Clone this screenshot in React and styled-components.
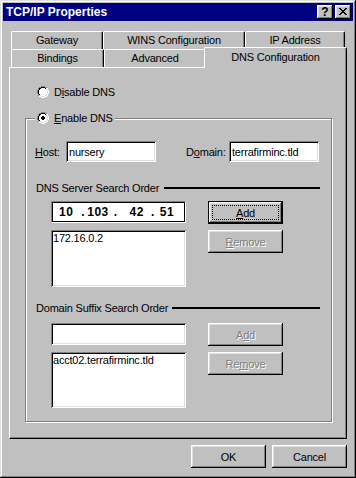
import React from "react";
import styled, { createGlobalStyle, css } from "styled-components";

const GlobalStyle = createGlobalStyle`
  html, body { margin: 0; padding: 0; background: #c0c0c0; }
  body {
    font-family: "Liberation Sans", Arial, sans-serif;
    font-size: 11px;
    letter-spacing: -0.2px;
    color: #000;
  }
  #root { width: 356px; height: 478px; }
`;

const raised = css`
  box-shadow: inset -1px -1px #000, inset 1px 1px #fff, inset -2px -2px #808080,
    inset 2px 2px #dfdfdf;
`;
const sunken = css`
  box-shadow: inset 1px 1px #808080, inset -1px -1px #fff, inset 2px 2px #000,
    inset -2px -2px #dfdfdf;
`;

const Window = styled.div`
  box-sizing: border-box;
  width: 356px;
  height: 478px;
  padding: 3px;
  background: #c0c0c0;
  box-shadow: inset -1px -1px #000, inset 1px 1px #dfdfdf, inset -2px -2px #808080,
    inset 2px 2px #fff;
  display: flex;
  flex-direction: column;
`;

const TitleBar = styled.div`
  flex: none;
  height: 18px;
  display: flex;
  align-items: center;
  background: #000080;
  color: #fff;
  padding: 0 2px 0 3px;
`;

const TitleText = styled.span`
  flex: 1;
  font-weight: bold;
  font-size: 12px;
  letter-spacing: 0;
`;

const CaptionButtons = styled.div`
  display: flex;
  gap: 2px;
`;

const CaptionButton = styled.div`
  box-sizing: border-box;
  width: 16px;
  height: 14px;
  background: #c0c0c0;
  ${raised}
  display: flex;
  align-items: center;
  justify-content: center;
  color: #000;
  font-weight: bold;
  font-size: 12px;
  letter-spacing: 0;
  line-height: 1;
  padding-bottom: 1px;
`;

const Body = styled.div`
  flex: 1;
  display: flex;
  flex-direction: column;
  padding: 10px 6px 7px 6px;
`;

const TabStrip = styled.div`
  position: relative;
  z-index: 1;
  display: flex;
  flex-direction: column;
  padding: 0 2px;
`;

const TabRow = styled.div`
  display: flex;
  align-items: flex-start;
  height: 18px;
`;

const Tab = styled.div`
  box-sizing: border-box;
  flex: none;
  width: ${(p) => p.$w}px;
  height: 18px;
  background: #c0c0c0;
  border-top: 1px solid #fff;
  border-left: 1px solid #fff;
  border-right: 1px solid #000;
  border-radius: 2px 2px 0 0;
  box-shadow: inset -1px 0 #808080;
  display: flex;
  align-items: center;
  justify-content: center;
  padding-bottom: 1px;
  white-space: nowrap;
  ${(p) =>
    p.$active &&
    css`
      width: ${p.$w + 4}px;
      height: 21px;
      margin: -2px -2px -1px -2px;
      padding-bottom: 3px;
      position: relative;
      z-index: 2;
    `}
`;

const Panel = styled.div`
  box-sizing: border-box;
  height: 372px;
  border-top: 1px solid #fff;
  border-left: 1px solid #fff;
  border-right: 1px solid #000;
  border-bottom: 1px solid #000;
  box-shadow: inset -1px -1px #808080;
  padding: 18px 0 0 15px;
  display: flex;
  flex-direction: column;
  align-items: flex-start;
`;

const RadioRow = styled.div`
  display: flex;
  align-items: center;
  height: 12px;
  gap: 5px;
  margin-left: ${(p) => p.$ml || 0}px;
  white-space: nowrap;
`;

const GroupBox = styled.div`
  position: relative;
  box-sizing: border-box;
  width: 307px;
  height: 304px;
  margin-top: 20px;
  border: 1px solid #808080;
  box-shadow: inset 1px 1px #fff, 1px 1px #fff;
  padding: 22px 11px 0 0;
  display: flex;
  flex-direction: column;
  align-items: stretch;
`;

const Legend = styled.div`
  position: absolute;
  top: -7px;
  left: 9px;
  background: #c0c0c0;
  padding: 0 2px;
`;

const FieldRow = styled.div`
  display: flex;
  align-items: center;
  height: 21px;
  margin-left: 9px;
`;

const Label = styled.span`
  flex: none;
  width: ${(p) => p.$w}px;
  margin-left: ${(p) => p.$ml || 0}px;
  white-space: nowrap;
`;

const Edit = styled.div`
  box-sizing: border-box;
  flex: none;
  width: ${(p) => p.$w || 135}px;
  height: ${(p) => p.$h || 21}px;
  background: #fff;
  ${sunken}
  padding: 0 3px;
  display: flex;
  align-items: center;
  white-space: nowrap;
`;

const SectionHeader = styled.div`
  display: flex;
  align-items: center;
  height: 13px;
  margin: ${(p) => p.$mt}px 0 0 10px;
  white-space: nowrap;
`;

const Rule = styled.div`
  flex: 1;
  height: 2px;
  background: #000;
  margin-left: ${(p) => p.$gap}px;
`;

const ControlGrid = styled.div`
  display: grid;
  grid-template-columns: 135px 75px;
  grid-template-rows: 23px ${(p) => p.$listH}px;
  column-gap: 22px;
  row-gap: 6px;
  align-items: start;
  margin: ${(p) => p.$mt}px 0 0 25px;
`;

const IpBox = styled.div`
  box-sizing: border-box;
  height: 22px;
  background: #fff;
  border: 1px solid;
  border-color: #808080 #fff #fff #808080;
  box-shadow: inset 0 0 0 1px #000;
  display: flex;
  align-items: center;
  font-weight: bold;
  font-size: 12px;
  letter-spacing: 0.5px;
  padding-left: 7px;
  white-space: pre;
`;

const Octet = styled.span`
  margin-left: ${(p) => p.$ml || 0}px;
`;

const ListBox = styled.div`
  box-sizing: border-box;
  height: 100%;
  background: #fff;
  ${sunken}
  padding: 2px 2px;
  line-height: 13px;
  white-space: nowrap;
`;

const Button = styled.div`
  position: relative;
  box-sizing: border-box;
  width: 75px;
  height: 23px;
  background: #c0c0c0;
  ${raised}
  display: flex;
  align-items: center;
  justify-content: center;
  white-space: nowrap;
  ${(p) =>
    p.$disabled &&
    css`
      color: #808080;
      text-shadow: 1px 1px #fff;
    `}
  ${(p) =>
    p.$default &&
    css`
      border: 1px solid #000;
      &::after {
        content: "";
        position: absolute;
        inset: 3px;
        border: 1px dotted #000;
      }
    `}
`;

const ButtonRow = styled.div`
  display: flex;
  justify-content: flex-end;
  gap: 6px;
  margin-top: 6px;
`;

/* ---------- pixel drawings ---------- */

const OUTER = {
  0: [4, 5, 6, 7], 1: [2, 3, 8, 9], 2: [1, 10], 3: [1, 10], 4: [0, 11], 5: [0, 11],
  6: [0, 11], 7: [0, 11], 8: [1, 10], 9: [1, 10], 10: [2, 3, 8, 9], 11: [4, 5, 6, 7],
};
const INNER = {
  1: [4, 5, 6, 7], 2: [2, 3, 8, 9], 3: [2, 9], 4: [1, 10], 5: [1, 10], 6: [1, 10],
  7: [1, 10], 8: [2, 9], 9: [2, 3, 8, 9], 10: [4, 5, 6, 7],
};
const FILL = { 2: [4, 7], 3: [3, 8], 4: [2, 9], 5: [2, 9], 6: [2, 9], 7: [2, 9], 8: [3, 8], 9: [4, 7] };
const DOT = [
  [5, 4], [6, 4], [4, 5], [5, 5], [6, 5], [7, 5], [4, 6], [5, 6], [6, 6], [7, 6], [5, 7], [6, 7],
];

function RadioIcon({ checked }) {
  const px = [];
  Object.entries(OUTER).forEach(([y, xs]) =>
    xs.forEach((x) => px.push([x, +y, x + +y <= 10 ? "#808080" : "#fff"]))
  );
  Object.entries(INNER).forEach(([y, xs]) =>
    xs.forEach((x) => px.push([x, +y, x + +y <= 10 ? "#000" : "#dfdfdf"]))
  );
  Object.entries(FILL).forEach(([y, [a, b]]) => {
    for (let x = a; x <= b; x++) px.push([x, +y, "#fff"]);
  });
  if (checked) DOT.forEach(([x, y]) => px.push([x, y, "#000"]));
  return (
    <svg width="12" height="12" viewBox="0 0 12 12" shapeRendering="crispEdges" style={{ flex: "none" }}>
      {px.map(([x, y, c], i) => (
        <rect key={i} x={x} y={y} width="1" height="1" fill={c} />
      ))}
    </svg>
  );
}

const X_PIX = ["KK....KK", ".KK..KK.", "..KKKK..", "...KK...", "..KKKK..", ".KK..KK.", "KK....KK"];

function CloseGlyph() {
  const rects = [];
  X_PIX.forEach((row, y) =>
    row.split("").forEach((ch, x) => {
      if (ch === "K") rects.push(<rect key={`${x}-${y}`} x={x} y={y} width="1" height="1" fill="#000" />);
    })
  );
  return (
    <svg width="8" height="7" viewBox="0 0 8 7" shapeRendering="crispEdges">
      {rects}
    </svg>
  );
}

export default function App() {
  return (
    <>
      <GlobalStyle />
      <Window>
        <TitleBar>
          <TitleText>TCP/IP Properties</TitleText>
          <CaptionButtons>
            <CaptionButton>?</CaptionButton>
            <CaptionButton>
              <CloseGlyph />
            </CaptionButton>
          </CaptionButtons>
        </TitleBar>

        <Body>
          <TabStrip>
            <TabRow>
              <Tab $w={92}>Gateway</Tab>
              <Tab $w={142}>WINS Configuration</Tab>
              <Tab $w={100}>IP Address</Tab>
            </TabRow>
            <TabRow>
              <Tab $w={93}>Bindings</Tab>
              <Tab $w={102}>Advanced</Tab>
              <Tab $w={139} $active>
                DNS Configuration
              </Tab>
            </TabRow>
          </TabStrip>

          <Panel>
            <RadioRow $ml={12}>
              <RadioIcon />
              <span>
                D<u>i</u>sable DNS
              </span>
            </RadioRow>

            <GroupBox>
              <Legend>
                <RadioRow>
                  <RadioIcon checked />
                  <span>
                    <u>E</u>nable DNS
                  </span>
                </RadioRow>
              </Legend>

              <FieldRow>
                <Label $w={31}>
                  <u>H</u>ost:
                </Label>
                <Edit $w={90}>nursery</Edit>
                <Label $w={43} $ml={30}>
                  D<u>o</u>main:
                </Label>
                <Edit $w={90}>terrafirminc.tld</Edit>
              </FieldRow>

              <SectionHeader $mt={19}>
                <span>DNS Server Search Order</span>
                <Rule $gap={5} />
              </SectionHeader>

              <ControlGrid $mt={7} $listH={57}>
                <IpBox>
                  <Octet>10</Octet>
                  <Octet $ml={8}>.</Octet>
                  <Octet $ml={2}>103</Octet>
                  <Octet $ml={5}>.</Octet>
                  <Octet $ml={12}>42</Octet>
                  <Octet $ml={7}>.</Octet>
                  <Octet $ml={5}>51</Octet>
                </IpBox>
                <Button $default>
                  <span>
                    <u>A</u>dd
                  </span>
                </Button>
                <ListBox>172.16.0.2</ListBox>
                <Button $disabled>
                  <span>
                    <u>R</u>emove
                  </span>
                </Button>
              </ControlGrid>

              <SectionHeader $mt={14}>
                <span>Domain Suffix Search Order</span>
                <Rule $gap={4} />
              </SectionHeader>

              <ControlGrid $mt={9} $listH={56}>
                <Edit $w={135} $h={22} />
                <Button $disabled>
                  <span>
                    A<u>d</u>d
                  </span>
                </Button>
                <ListBox>acct02.terrafirminc.tld</ListBox>
                <Button $disabled>
                  <span>
                    Re<u>m</u>ove
                  </span>
                </Button>
              </ControlGrid>
            </GroupBox>
          </Panel>

          <ButtonRow>
            <Button>OK</Button>
            <Button>Cancel</Button>
          </ButtonRow>
        </Body>
      </Window>
    </>
  );
}
